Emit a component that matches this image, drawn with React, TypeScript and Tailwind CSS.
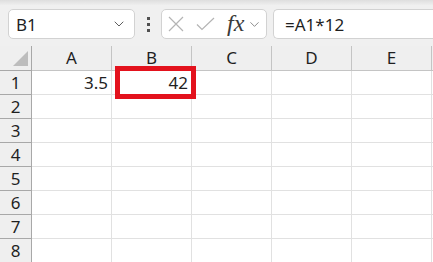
import { ChevronDown } from "lucide-react";

const cols = ["A", "B", "C", "D", "E"];
const rows = [1, 2, 3, 4, 5, 6, 7, 8];

const cellValue = (r: number, c: string) => {
  if (r === 1 && c === "A") return "3.5";
  if (r === 1 && c === "B") return "42";
  return "";
};

export default function App() {
  return (
    <div
      className="relative w-[433px] h-[262px] overflow-hidden bg-white text-[#1f1f1f]"
      style={{ fontFamily: '"Noto Sans", "Open Sans", sans-serif' }}
    >
      {/* Formula bar */}
      <div className="h-[46px] bg-[#f0f0f0] bg-gradient-to-b from-[#dedede] via-[#f0f0f0] via-[12%] to-[#f0f0f0] flex items-start pt-[9px]">
        <div className="ml-[8px] w-[127px] h-[30px] bg-white border border-[#d2d2d2] rounded-[5px] flex items-center pl-[7px] pr-[7px]">
          <span className="text-[17px] flex-1 leading-none">B1</span>
          <ChevronDown size={16} strokeWidth={1.3} className="text-[#444]" />
        </div>
        <div className="w-[26px] h-[30px] flex flex-col items-center justify-center gap-[3px]">
          <div className="w-[3px] h-[3px] bg-[#505050]" />
          <div className="w-[3px] h-[3px] bg-[#505050]" />
          <div className="w-[3px] h-[3px] bg-[#505050]" />
        </div>
        <div className="w-[106px] h-[30px] bg-white border border-[#d2d2d2] rounded-[5px] flex items-center pl-[6px]">
          <svg width="16" height="16" viewBox="0 0 16 16" className="text-[#b4b4b4]">
            <path d="M1 1L15 15M15 1L1 15" stroke="currentColor" strokeWidth="1.2" fill="none" />
          </svg>
          <svg width="19" height="14" viewBox="0 0 19 14" className="ml-[12px] text-[#b4b4b4]">
            <path d="M1 7.5L6 12.5L18 1" stroke="currentColor" strokeWidth="1.2" fill="none" />
          </svg>
          <span
            className="ml-[12px] text-[24px] italic leading-none text-[#3a3a3a] -mt-[3px]"
            style={{ fontFamily: '"Liberation Serif", "DejaVu Serif", serif' }}
          >
            fx
          </span>
          <ChevronDown size={15} strokeWidth={1.2} className="text-[#666] ml-[3px]" />
        </div>
        <div className="ml-[6px] flex-1 h-[30px] bg-white border border-r-0 border-[#d2d2d2] rounded-l-[5px] flex items-center pl-[11px]">
          <span className="text-[17px] leading-none">=A1*12</span>
        </div>
      </div>

      {/* Grid */}
      <div className="grid grid-cols-[32px_repeat(5,80px)_1fr]">
        <div className="h-[25px] bg-[#efefef] border-r border-b border-[#a8a8a8] relative">
          <svg className="absolute left-[13px] top-[5px]" width="15" height="15" viewBox="0 0 15 15">
            <polygon points="15,0 15,15 0,15" fill="#bdbdbd" />
          </svg>
        </div>
        {cols.map((c) => (
          <div
            key={c}
            className="h-[25px] bg-[#efefef] border-r border-b border-r-[#c4c4c4] border-b-[#c4c4c4] flex items-center justify-center text-[17px]"
          >
            {c}
          </div>
        ))}
        <div className="h-[25px] bg-[#efefef] border-b border-[#c4c4c4]" />

        {rows.map((r) => (
          <div key={r} className="contents">
            <div className="h-[24px] bg-[#efefef] border-r border-b border-[#a8a8a8] flex items-center justify-center text-[17px]">
              {r}
            </div>
            {cols.map((c) => (
              <div
                key={c}
                className="h-[24px] border-r border-b border-[#e1e1e1] flex items-center justify-end pr-[3px] text-[17px]"
              >
                {cellValue(r, c)}
              </div>
            ))}
            <div className="h-[24px] border-b border-[#e1e1e1]" />
          </div>
        ))}
      </div>

      {/* Red annotation box around B1 */}
      <div className="absolute left-[115px] top-[66px] w-[81px] h-[33px] border-[5px] border-[#e3121d]" />
    </div>
  );
}
